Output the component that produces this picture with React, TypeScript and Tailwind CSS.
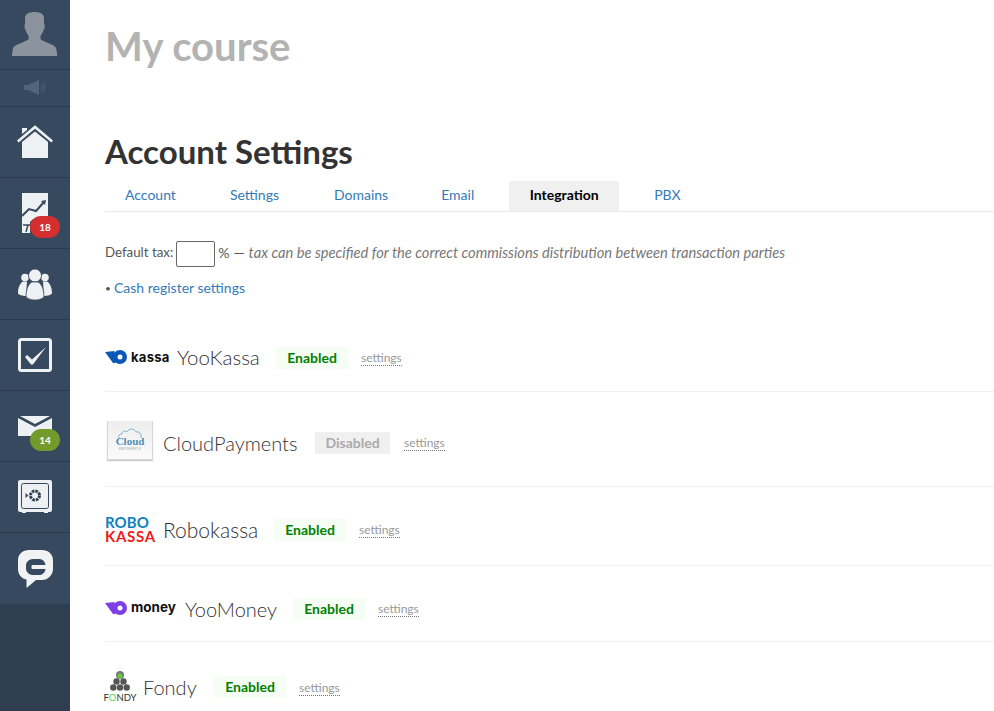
import React from 'react';

// ============================================================================
// SIDEBAR ICONS
// ============================================================================

const Avatar = () => (
  <svg width="70" height="69" viewBox="0 0 70 69">
    <path
      fill="#8b939e"
      d="M25 18c0-4 4-6 9.500-6s9.500 2 9.500 6v6c1 0 1 4 0 5-1 3-2 5-3.500 7v3c2 3 14 5 15.500 9 .7 2 1 5 1.200 8H12c.2-3 .5-6 1.200-8 1.500-4 13.500-6 15.500-9v-3c-1.500-2-2.500-4-3.500-7-1-1-1-5 0-5z"
    />
  </svg>
);

const Speaker = () => (
  <svg width="24" height="16" viewBox="0 0 24 16">
    <rect x="1" y="5" width="4" height="5" fill="#50647c" />
    <path fill="#50647c" d="M5 5l11-5v15L5 10z" />
    <path fill="none" stroke="#50647c" d="M18 4c1.500 2 1.500 5 0 7M20 2.500c2 3 2 7 0 10" />
  </svg>
);

const Home = () => (
  <svg width="36" height="34" viewBox="0 0 36 34">
    <path fill="#eef1f3" d="M5 3h5v2L5 9z" />
    <path fill="none" stroke="#eef1f3" strokeWidth="2.500" d="M.8 16.500L18 2l17.200 14.500" />
    <path fill="#eef1f3" d="M5 17L18 6.500 31 17v16H5z" />
  </svg>
);

const Chart = () => (
  <svg width="28" height="40" viewBox="0 0 28 40">
    <path fill="#eef1f3" d="M0 0h26v26H11l-3 3v11H0z" />
    <path fill="none" stroke="#37495e" strokeWidth="2" d="M0 23l7-7 7 2 8-9" />
    <path fill="#37495e" d="M24 7l-5 1 4 4z" />
    <path stroke="#37495e" strokeWidth="1.500" d="M1 32h8M6 32l-2 7" />
  </svg>
);

const Users = () => (
  <svg width="36" height="31" viewBox="0 0 36 31">
    <circle cx="8" cy="8.500" r="3.800" fill="#eef1f3" />
    <circle cx="28" cy="8.500" r="3.800" fill="#eef1f3" />
    <path fill="#eef1f3" d="M1 24c0-5 2-10 5-11.500h4L9 27c-3 0-8-1-8-3zM35 24c0-5-2-10-5-11.500h-4L27 27c3 0 8-1 8-3z" />
    <circle cx="18" cy="6.500" r="6.500" fill="#eef1f3" stroke="#37495e" strokeWidth=".8" />
    <path fill="#eef1f3" stroke="#37495e" strokeWidth=".8" d="M9 27c0-7 3-13 6-14h6c3 1 6 7 6 14 0 2-4 4-9 4s-9-2-9-4z" />
  </svg>
);

const Check = () => (
  <svg width="34" height="34" viewBox="0 0 34 34">
    <rect x="1.500" y="1.500" width="31" height="31" rx="2" fill="none" stroke="#eef1f3" strokeWidth="3" />
    <path fill="#eef1f3" d="M7 19l2-2 5 4.500L28 9 15 26.500h-2z" />
  </svg>
);

const Mail = () => (
  <svg width="34" height="20" viewBox="0 0 34 20">
    <path fill="#eef1f3" d="M0 2l17 9L34 2v18H0z" />
    <path fill="#eef1f3" d="M2 0h30L17 8z" />
  </svg>
);

const Safe = () => (
  <svg width="34" height="34" viewBox="0 0 34 34">
    <path fill="#eef1f3" d="M2 0h30a2 2 0 012 2v28a2 2 0 01-2 2h-2v1h-4v-1H8v1H4v-1H2a2 2 0 01-2-2V2a2 2 0 012-2z" />
    <rect x="3.500" y="3.500" width="27" height="25" rx="2" fill="none" stroke="#37495e" />
    <circle cx="17" cy="15.500" r="4.500" fill="none" stroke="#2f3f51" strokeWidth="3" strokeDasharray="2.600 .9" />
    <path fill="#37495e" d="M7.500 13l3 2.500-3 2.500z" />
  </svg>
);

const Chat = () => (
  <svg width="35" height="39" viewBox="0 0 35 39">
    <path
      fill="#f1f2f3"
      d="M11 1h13c6 0 11 4 11 10v9c0 6-5 11-11 11h-6l-9.500 8v-8.500C3 29.500 0 25 0 20v-9C0 5 5 1 11 1z"
    />
    <path
      fill="#37495e"
      d="M15 10h6c3 0 6 2 6.500 6H15c-1 0-1.500 .5-1.500 1v2c0 .5 .5 1 1.500 1h12.500c-.5 4-3.500 6-6.500 6h-6c-4 0-7-3-7-6.500v-3C8 13 11 10 15 10z"
    />
  </svg>
);

const Badge = ({ value, color, bottom }: { value: string; color: string; bottom: string }) => (
  <span
    className={`absolute left-[30px] flex h-[22px] w-[30px] items-center justify-center rounded-full text-[10px] font-bold text-white ${color} ${bottom}`}
  >
    {value}
  </span>
);

const NavItem = ({ children, height = 'h-[71px]' }: { children: React.ReactNode; height?: string }) => (
  <div className={`flex items-center justify-center border-b border-[#2c3a4b] ${height}`}>{children}</div>
);

const Sidebar = () => (
  <aside className="flex h-[711px] w-[70px] shrink-0 flex-col bg-[#2f3f51]">
    <div className="bg-[#37495e]">
      <NavItem height="h-[70px]">
        <Avatar />
      </NavItem>
      <NavItem height="h-[37px]">
        <Speaker />
      </NavItem>
      <NavItem>
        <Home />
      </NavItem>
      <NavItem>
        <div className="relative h-[40px] w-[70px] pl-[22px]">
          <Chart />
          <Badge value="18" color="bg-[#d32f2f]" bottom="bottom-[-5px]" />
        </div>
      </NavItem>
      <NavItem>
        <Users />
      </NavItem>
      <NavItem>
        <Check />
      </NavItem>
      <NavItem>
        <div className="relative h-[20px] w-[70px] pl-[18px]">
          <Mail />
          <Badge value="14" color="bg-[#729b2b]" bottom="bottom-[-15px]" />
        </div>
      </NavItem>
      <NavItem>
        <Safe />
      </NavItem>
      <div className="flex h-[71px] items-center justify-center">
        <Chat />
      </div>
    </div>
  </aside>
);

// ============================================================================
// PAYMENT LOGOS
// ============================================================================

const YooMark = ({ color }: { color: string }) => (
  <svg width="22" height="14" viewBox="0 0 22 14" className="shrink-0">
    <path fill={color} d="M0 2L9.500 1 10.500 13H8z" />
    <circle cx="15" cy="7" r="7" fill={color} />
    <circle cx="15" cy="7" r="2.500" fill="#fff" />
  </svg>
);

const KassaLogo = () => (
  <div className="flex w-[72px] items-center gap-[4px] pb-[1px]">
    <YooMark color="#0b57b5" />
    <span className="font-['Inter',sans-serif] text-[13px] font-bold leading-none tracking-[0.3px] text-[#111]">kassa</span>
  </div>
);

const MoneyLogo = () => (
  <div className="flex w-[72px] items-center gap-[4px] pb-[2px]">
    <YooMark color="#7b3fe4" />
    <span className="font-['Inter',sans-serif] text-[13.500px] font-bold leading-none text-[#111]">money</span>
  </div>
);

const CloudLogo = () => (
  <div className="mb-[4px] ml-[2px] flex h-[39px] w-[46px] flex-col items-center justify-center border-x border-b border-[#d8d8d8] bg-gradient-to-b from-[#eeeeee] to-[#fafafa] shadow-[0_1px_1px_#ccc]">
    <svg width="24" height="12" viewBox="0 0 24 12">
      <path fill="none" stroke="#7fb2d0" d="M2 11C0 9 0 6 4 6c0-3 3-4 5-2 2-4 7-4 9 0 3-1 6 2 5 6" />
    </svg>
    <span className="mt-[-4px] font-['Liberation_Serif',serif] text-[11px] font-bold leading-[11px] text-[#4d8eb5]">Cloud</span>
    <span className="text-[3.500px] leading-[5px] tracking-[0.5px] text-[#7fa9c2]">PAYMENTS</span>
  </div>
);

const RoboLogo = () => (
  <div className="flex w-[51px] flex-col pb-[1px] text-[15px] font-bold leading-[14px]">
    <span className="tracking-[0.1px] text-[#0d7fc0]">ROBO</span>
    <span className="tracking-[0.7px] text-[#ee1b1b]">KASSA</span>
  </div>
);

const FondyLogo = () => (
  <div className="flex w-[30px] flex-col items-center">
    <svg width="20" height="21" viewBox="0 0 20 21">
      <circle cx="10" cy="4" r="4" fill="#777" />
      <circle cx="10" cy="5" r="2.500" fill="#66cc44" />
      <circle cx="6.500" cy="10.500" r="3.200" fill="#555" />
      <circle cx="13.500" cy="10.500" r="3.200" fill="#555" />
      <circle cx="3.300" cy="16.500" r="3.200" fill="#555" />
      <circle cx="10" cy="16.500" r="3.200" fill="#555" />
      <circle cx="16.700" cy="16.500" r="3.200" fill="#555" />
    </svg>
    <span className="mt-[1px] text-[9.500px] leading-[10px] text-[#333]">
      F<span className="text-[#66cc44]">O</span>NDY
    </span>
  </div>
);

// ============================================================================
// INTEGRATION ROWS
// ============================================================================

const Integration = ({
  logo,
  name,
  enabled = true,
  nameClass,
  rowClass,
}: {
  logo: React.ReactNode;
  name: string;
  enabled?: boolean;
  nameClass: string;
  rowClass: string;
}) => (
  <div className={`flex items-center border-b border-[#f0f0f0] ${rowClass}`}>
    {logo}
    <span className={`shrink-0 font-light leading-none text-[#333] ${nameClass}`}>{name}</span>
    <span
      className={`flex h-[22px] items-center justify-center pb-[1px] text-[14px] font-bold ${
        enabled ? 'w-[72px] bg-[#f5fdf5] text-[#008000]' : 'w-[75px] bg-[#f0f0f0] text-[#aaa]'
      }`}
    >
      {enabled ? 'Enabled' : 'Disabled'}
    </span>
    <span
      className={`mt-[2px] border-b border-dotted border-[#777] text-[12px] leading-[14px] text-[#999] ${
        enabled ? 'ml-[13px]' : 'ml-[14px]'
      }`}
    >
      settings
    </span>
  </div>
);

const tabs = [
  { label: 'Account', gap: 'mr-[14px]' },
  { label: 'Settings', gap: 'mr-[15px]' },
  { label: 'Domains', gap: 'mr-[13px]' },
  { label: 'Email', gap: 'mr-[15px]' },
  { label: 'Integration', gap: 'mr-[15px]' },
  { label: 'PBX', gap: '' },
];

export default function App() {
  return (
    <div className="flex h-[711px] w-[994px] overflow-hidden bg-white font-['Lato',sans-serif] text-[14px] text-[#333]">
      <Sidebar />
      <main className="min-w-0 flex-1 pl-[35px]">
        <h1 className="pt-[24px] text-[40px] font-bold leading-[44px] text-[#b3b3b3]">My course</h1>
        <h2 className="mt-[62px] text-[33px] font-bold leading-[42px] text-[#333]">Account Settings</h2>
        <div className="mt-[9px] flex h-[31px] border-b border-[#e8e8e8]">
          {tabs.map((tab) => (
            <a
              key={tab.label}
              className={`flex h-[30px] items-center px-[20px] pb-[3px] ${tab.gap} ${
                tab.label === 'Integration' ? 'w-[110px] justify-center bg-[#f0f0f0] font-bold text-black' : 'text-[#337ab7]'
              }`}
            >
              {tab.label}
            </a>
          ))}
        </div>
        <div className="mt-[29px] flex h-[26px] items-center">
          <span className="pb-[3px] text-[13.300px] text-[#555]">Default tax:</span>
          <input className="mx-[3px] h-[26px] w-[39px] rounded-[2px] border border-[#666]" />
          <span className="pb-[3px] text-[#555]">%</span>
          <span className="ml-[4px] pb-[3px] text-[#555]">—</span>
          <em className="ml-[4px] pb-[3px] text-[14.700px] text-[#777]">
            tax can be specified for the correct commissions distribution between transaction parties
          </em>
        </div>
        <div className="mt-[11px] flex items-center leading-[20px]">
          <span className="w-[9px] text-[10px] text-[#555]">•</span>
          <a className="text-[#337ab7]">Cash register settings</a>
        </div>
        <Integration logo={<KassaLogo />} name="YooKassa" nameClass="w-[99px] text-[20.500px]" rowClass="mt-[26px] h-[68px]" />
        <Integration
          logo={<CloudLogo />}
          name="CloudPayments"
          enabled={false}
          nameClass="ml-[10px] w-[152px] text-[20px]"
          rowClass="h-[95px] pt-[7px]"
        />
        <Integration logo={<RoboLogo />} name="Robokassa" nameClass="ml-[7px] w-[111px] text-[21px]" rowClass="h-[79px] pt-[7px]" />
        <Integration logo={<MoneyLogo />} name="YooMoney" nameClass="ml-[8px] w-[108px] text-[20px]" rowClass="h-[76px] pt-[10px]" />
        <Integration logo={<FondyLogo />} name="Fondy" nameClass="ml-[8px] w-[71px] text-[20px]" rowClass="h-[90px] border-b-0" />
      </main>
    </div>
  );
}
